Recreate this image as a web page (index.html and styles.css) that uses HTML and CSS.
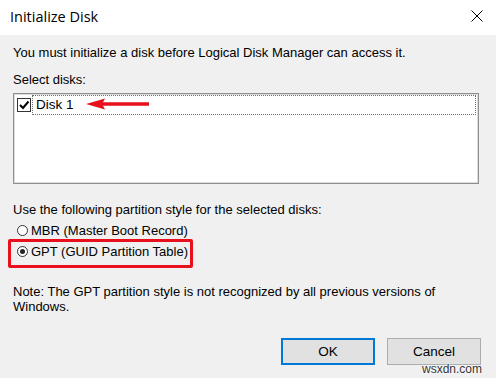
FILE: index.html
```html
<!DOCTYPE html>
<html>
<head>
<meta charset="utf-8">
<link rel="stylesheet" href="styles.css">
</head>
<body>
<div class="dialog">
  <div class="titlebar">
    <span class="title">Initialize Disk</span>
    <svg class="close" width="12" height="12" viewBox="0 0 12 12"><path d="M0.5 0.5 L11.5 11.5 M11.5 0.5 L0.5 11.5" stroke="#000" stroke-width="1"/></svg>
  </div>
  <div class="content">
    <p class="intro">You must initialize a disk before Logical Disk Manager can access it.</p>
    <p class="label">Select disks:</p>
    <div class="listbox">
      <div class="row">
        <span class="checkbox"><svg width="12" height="12" viewBox="0 0 12 12"><path d="M2 6 L5 9 L10.5 2.5" fill="none" stroke="#000" stroke-width="2"/></svg></span>
        <span class="focus">Disk 1</span>
        <svg class="arrow" width="64" height="12" viewBox="0 0 64 12"><path d="M0 6 L19 0.5 L17 4.3 L63 4.3 L63 7.7 L17 7.7 L19 11.5 Z" fill="#e8101c"/></svg>
      </div>
    </div>
    <p class="label2">Use the following partition style for the selected disks:</p>
    <div class="radio-row first"><span class="radio"></span>MBR (Master Boot Record)</div>
    <div class="radio-row"><span class="radio checked"></span>GPT (GUID Partition Table)<span class="highlight"></span></div>
    <p class="note">Note: The GPT partition style is not recognized by all previous versions of<br>Windows.</p>
    <div class="buttons">
      <button class="btn default">OK</button>
      <button class="btn">Cancel</button>
    </div>
  </div>
  <span class="watermark">wsxdn.com</span>
</div>
</body>
</html>
```
FILE: styles.css
```css
html, body {
  margin: 0;
  padding: 0;
}
body {
  width: 496px;
  height: 378px;
  overflow: hidden;
  background: #f0f0f0;
  font-family: "Liberation Sans", Arial, sans-serif;
  font-size: 13px;
  color: #000;
}
.dialog {
  position: relative;
  width: 496px;
  height: 378px;
}
.titlebar {
  height: 35px;
  background: #fff;
  display: flex;
  align-items: center;
  justify-content: space-between;
  padding: 0 13px 0 10px;
  box-sizing: border-box;
}
.title {
  font-family: "Open Sans", "Noto Sans", sans-serif;
  font-size: 14.5px;
  margin-top: -2px;
}
.close {
  display: block;
  margin-top: -3px;
}
.content {
  padding: 10px 0 0 13px;
}
p {
  margin: 0;
  line-height: 16px;
}
.label {
  margin-top: 11px;
}
.listbox {
  margin-top: 5px;
  width: 466px;
  height: 91px;
  box-sizing: border-box;
  background: #fff;
  border: 1px solid #8f8f8f;
  box-shadow: inset 0 0 0 1px #dcdcdc;
  padding-top: 1px;
}
.row {
  position: relative;
  display: flex;
  align-items: center;
  margin: 0 2px 0 3px;
  height: 20px;
}
.checkbox {
  width: 14px;
  height: 14px;
  box-sizing: border-box;
  border: 1px solid #333;
  background: #fff;
  display: flex;
  align-items: center;
  justify-content: center;
}
.checkbox svg {
  display: block;
}
.focus {
  flex: 1;
  height: 20px;
  box-sizing: border-box;
  margin-left: 1px;
  border: 1px dotted #6e6e6e;
  padding-left: 3px;
  line-height: 18px;
  font-size: 13.5px;
}
.arrow {
  position: absolute;
  left: 69px;
  top: 3px;
}
.label2 {
  margin-top: 18px;
}
.radio-row {
  position: relative;
  display: flex;
  align-items: center;
  line-height: 21px;
  height: 21px;
}
.radio-row.first {
  margin-top: 2px;
}
.radio {
  width: 11px;
  height: 11px;
  box-sizing: border-box;
  border: 1px solid #333;
  border-radius: 50%;
  background: #fff;
  margin: 0 3px 0 4px;
  position: relative;
}
.radio.checked::after {
  content: "";
  position: absolute;
  left: 2px;
  top: 2px;
  width: 5px;
  height: 5px;
  border-radius: 50%;
  background: #222;
}
.highlight {
  position: absolute;
  left: -5px;
  top: -2px;
  width: 185px;
  height: 29px;
  box-sizing: border-box;
  border: 3px solid #e8101c;
  border-radius: 2px;
}
.note {
  margin-top: 22px;
  line-height: 15px;
}
.buttons {
  margin-top: 24px;
  display: flex;
  justify-content: flex-end;
  gap: 12px;
  padding-right: 15px;
}
.btn {
  width: 94px;
  height: 27px;
  background: #e1e1e1;
  border: 1px solid #adadad;
  font-family: "Liberation Sans", Arial, sans-serif;
  font-size: 13.5px;
  color: #000;
  padding: 0;
}
.btn.default {
  border: 1px solid #0078d7;
  box-shadow: inset 0 0 0 1px #0078d7;
}
.watermark {
  position: absolute;
  left: 422px;
  top: 362px;
  font-family: "Liberation Sans", Arial, sans-serif;
  font-size: 12px;
  color: #333;
  text-shadow: 0 0 2px #fff, 0 0 2px #fff;
}
```
